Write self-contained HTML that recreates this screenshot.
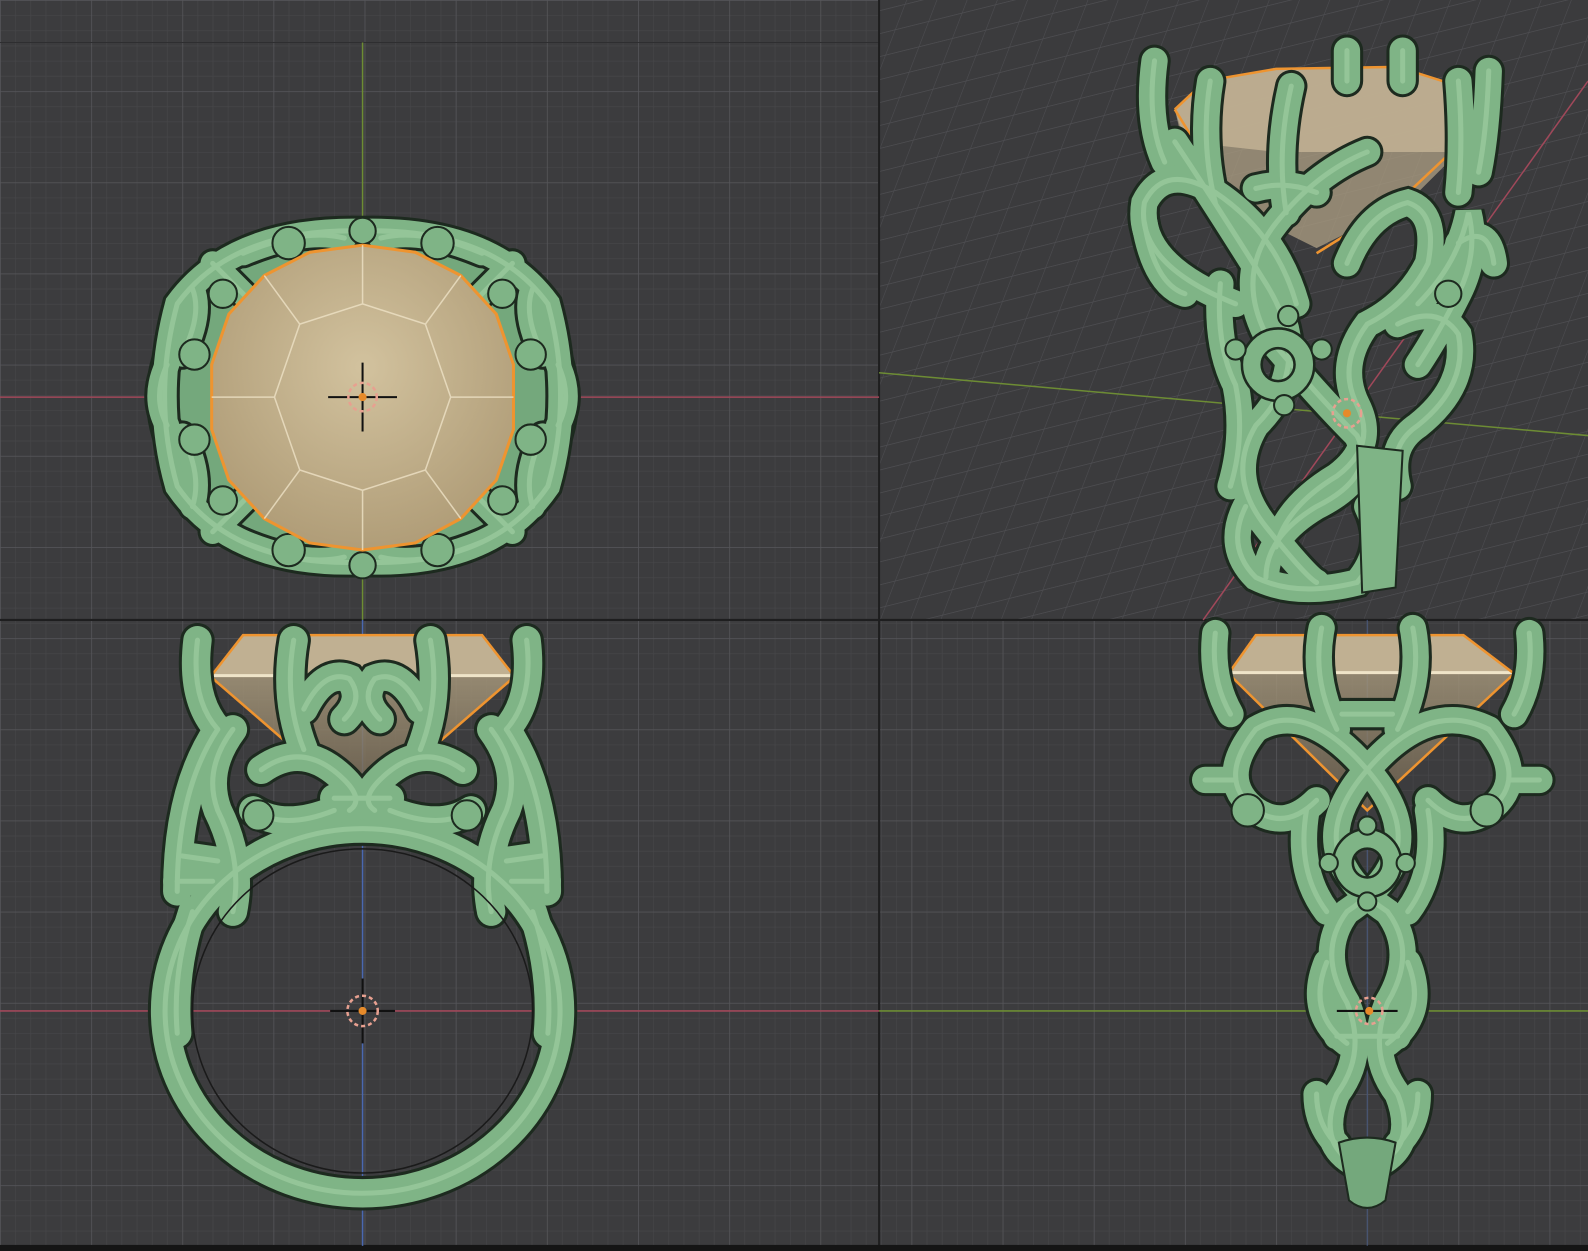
<!DOCTYPE html>
<html><head><meta charset="utf-8"><style>
html,body{margin:0;padding:0;background:#1b1b1b;}
svg{display:block}
</style></head><body>
<svg width="1588" height="1251" viewBox="0 0 1568 1235" preserveAspectRatio="none" xmlns="http://www.w3.org/2000/svg">
<defs>
<pattern id="g" width="15" height="15" patternUnits="userSpaceOnUse">
<rect width="15" height="15" fill="#3c3c3e"/>
<path d="M0 0H15M0 0V15" stroke="#47474a" stroke-width="1.2"/>
</pattern>
<pattern id="G" width="90" height="90" patternUnits="userSpaceOnUse">
<rect width="90" height="90" fill="url(#g)"/>
<path d="M0 0H90M0 0V90" stroke="#56565a" stroke-width="1.5"/>
</pattern>
<pattern id="P" width="34" height="22" patternUnits="userSpaceOnUse" patternTransform="rotate(-14) skewX(-35)">
<rect width="34" height="22" fill="#3b3b3d"/>
<path d="M0 0H34M0 0V22" stroke="#4e4e52" stroke-width="1.3"/>
</pattern>
<radialGradient id="gem" cx="50%" cy="40%" r="60%">
<stop offset="0" stop-color="#d2c29e"/><stop offset="1" stop-color="#b09d78"/>
</radialGradient>
<linearGradient id="gemside" x1="0" y1="0" x2="0" y2="1">
<stop offset="0" stop-color="#b6a788"/><stop offset="1" stop-color="#6a5e4c"/>
</linearGradient>

<g id="tl">
<path d="M175 300 Q150 392 175 480 Q230 560 358 555 Q486 560 541 480 Q566 392 541 300 Q486 225 358 228 Q230 225 175 300Z"/>
<path d="M165 360 Q150 392 165 420 M551 360 Q566 392 551 420"/>
<path d="M210 260 L250 300 M506 260 L466 300 M210 525 L250 485 M506 525 L466 485"/>
<path d="M180 430 Q200 470 190 500 M536 430 Q516 470 526 500 M180 350 Q200 310 190 285 M536 350 Q516 310 526 285"/>
<path d="M240 250 Q300 225 340 235 M476 250 Q416 225 376 235 M240 535 Q300 560 340 550 M476 535 Q416 560 376 550"/>
</g>
<g id="tr">
<path d="M1140 60 Q1132 120 1150 160 M1195 80 Q1185 140 1200 200 M1275 85 Q1260 150 1270 210 M1470 70 Q1468 130 1460 170 M1440 80 Q1445 140 1440 190 M1330 50 L1330 80 M1385 50 L1385 80"/>
<path d="M1160 140 Q1200 200 1250 280 Q1300 360 1240 420 Q1210 470 1250 520 Q1290 570 1300 575"/>
<path d="M1220 300 Q1120 260 1130 200 Q1150 160 1200 190 Q1260 230 1280 300"/>
<path d="M1350 150 Q1300 170 1260 220 Q1220 270 1250 330 Q1300 390 1340 430 Q1360 470 1300 500 Q1250 530 1250 570"/>
<path d="M1330 260 Q1350 210 1390 200 Q1420 210 1410 260 Q1390 300 1350 320 Q1320 360 1340 400 Q1360 440 1320 470 Q1270 500 1260 540"/>
<path d="M1230 500 Q1210 540 1240 570 Q1280 590 1340 575 Q1370 540 1350 500"/>
<path d="M1400 300 Q1440 260 1450 210 Q1460 250 1440 290 Q1420 330 1400 360"/>
<path d="M1205 280 Q1200 340 1220 380 Q1230 430 1215 480"/>
<path d="M1240 186 Q1270 178 1300 190"/>
<path d="M1380 320 Q1420 300 1440 330 Q1450 380 1400 420 Q1370 440 1380 480"/>
<path d="M1440 240 Q1470 220 1475 260 M1130 220 Q1140 280 1170 290"/>
</g>
<g id="bl">
<path d="M358 810 m-195 188 a195 180 0 1 0 390 0 a195 180 0 1 0 -390 0"/>
<path d="M195 632 Q188 690 215 720 M290 632 Q280 690 300 740 M425 632 Q435 690 415 740 M520 632 Q527 690 500 720"/>
<path d="M215 720 Q175 780 175 880 M500 720 Q540 780 540 880"/>
<path d="M230 720 Q200 760 215 800 Q240 850 230 900 M485 720 Q515 760 500 800 Q475 850 485 900"/>
<path d="M300 700 Q320 660 345 670 Q360 690 340 710 M415 700 Q395 660 370 670 Q355 690 375 710"/>
<path d="M258 760 Q300 730 340 770 Q360 790 345 800 M457 760 Q415 730 375 770 Q355 790 370 800"/>
<path d="M250 800 Q280 820 330 800 M465 800 Q435 820 385 800"/>
<path d="M180 845 L215 850 M175 870 L210 870 M535 845 L500 850 M540 870 L505 870"/>
<path d="M330 788 L385 788"/>
<path d="M190 900 Q170 960 175 1020 M526 900 Q546 960 541 1020"/>
</g>
<g id="br">
<path d="M1200 625 Q1195 670 1215 705 M1305 620 Q1295 670 1320 720 M1395 620 Q1405 670 1380 720 M1510 625 Q1515 670 1495 705"/>
<path d="M1240 720 Q1290 690 1350 760 Q1420 840 1330 900 Q1300 940 1330 990 Q1350 1040 1320 1080 Q1300 1130 1340 1150"/>
<path d="M1470 720 Q1410 690 1350 760 Q1280 840 1370 900 Q1400 940 1370 990 Q1350 1040 1380 1080 Q1400 1130 1360 1150"/>
<path d="M1240 720 Q1200 770 1240 800 Q1270 820 1300 790 M1470 720 Q1510 770 1470 800 Q1440 820 1410 790"/>
<path d="M1310 950 Q1290 1000 1330 1030 M1390 950 Q1410 1000 1370 1030"/>
<path d="M1190 770 L1220 770 M1520 770 L1490 770"/>
<path d="M1325 705 L1375 705 M1320 1023 L1380 1023"/>
<path d="M1300 1080 Q1300 1110 1320 1130 M1400 1080 Q1400 1110 1380 1130"/>
<path d="M1290 800 Q1280 860 1310 900 M1410 800 Q1420 860 1390 900"/>
</g>
</defs>

<rect x="0" y="0" width="868" height="612" fill="url(#G)"/>
<rect x="868" y="0" width="700" height="612" fill="url(#P)"/>
<rect x="0" y="612" width="868" height="620" fill="url(#G)"/>
<rect x="868" y="612" width="700" height="620" fill="url(#G)"/>
<path d="M0 42H868" stroke="#2e2e30" stroke-width="1"/>
<line x1="868" y1="0" x2="868" y2="1232" stroke="#1e1e1f" stroke-width="2"/>
<line x1="0" y1="612" x2="1568" y2="612" stroke="#1e1e1f" stroke-width="2"/>
<rect x="0" y="1229" width="1568" height="6" fill="#151515"/>

<line x1="0" y1="392" x2="868" y2="392" stroke="#a0485a" stroke-width="1.5"/>
<line x1="358" y1="42" x2="358" y2="612" stroke="#6d8c34" stroke-width="1.5"/>
<line x1="868" y1="368" x2="1568" y2="430" stroke="#6d8c34" stroke-width="1.5"/>
<line x1="1188" y1="612" x2="1568" y2="80" stroke="#a0485a" stroke-width="1.5"/>
<line x1="0" y1="998" x2="868" y2="998" stroke="#a0485a" stroke-width="1.5"/>
<line x1="358" y1="612" x2="358" y2="1230" stroke="#4a68b0" stroke-width="1.5"/>
<line x1="868" y1="998" x2="1568" y2="998" stroke="#6d8c34" stroke-width="1.5"/>
<line x1="1350" y1="612" x2="1350" y2="1230" stroke="#45567a" stroke-width="1"/>

<g fill="none" stroke-linecap="round">
<ellipse cx="358" cy="392" rx="212" ry="172" fill="#74a87c" stroke="#1d2a1f" stroke-width="4"/>
<use href="#tl" stroke="#1d2a1f" stroke-width="30"/>
<use href="#tl" stroke="#7fb486" stroke-width="24"/>
<use href="#tl" stroke="#a9d6aa" stroke-width="5" opacity=".5"/>
</g>
<g fill="#7fb486" stroke="#1d2a1f" stroke-width="2">
<circle cx="285" cy="240" r="16"/><circle cx="432" cy="240" r="16"/><circle cx="285" cy="543" r="16"/><circle cx="432" cy="543" r="16"/>
<circle cx="358" cy="228" r="13"/><circle cx="358" cy="558" r="13"/><circle cx="192" cy="350" r="15"/><circle cx="524" cy="350" r="15"/><circle cx="192" cy="434" r="15"/><circle cx="524" cy="434" r="15"/>
<circle cx="220" cy="290" r="14"/><circle cx="496" cy="290" r="14"/><circle cx="220" cy="494" r="14"/><circle cx="496" cy="494" r="14"/>
</g>
<polygon points="358,242 410,249 455,272 490,310 507,360 507,424 490,474 455,512 410,536 358,543 306,536 261,512 226,474 209,424 209,360 226,310 261,272 306,249" fill="url(#gem)" stroke="#ee9430" stroke-width="3"/>
<g stroke="#eee2c6" stroke-width="1.5" fill="none" opacity=".8">
<polygon points="358,300 420,320 445,392 420,464 358,484 296,464 271,392 296,320"/>
<path d="M358,242 L358,300 M455,272 L420,320 M507,392 L445,392 M455,512 L420,464 M358,543 L358,484 M261,512 L296,464 M209,392 L271,392 M261,272 L296,320"/>
</g>
<g stroke="#111" stroke-width="2"><line x1="324" y1="392" x2="392" y2="392"/><line x1="358" y1="358" x2="358" y2="426"/></g>
<circle cx="358" cy="392" r="14" fill="none" stroke="#e8a090" stroke-width="2.5" stroke-dasharray="4 3"/>
<circle cx="358" cy="392" r="4" fill="#e68a2a"/>

<polygon points="1160,108 1190,80 1260,68 1380,66 1440,85 1465,110 1440,150 1390,200 1300,245 1220,205 1170,150" fill="#a89a80" opacity=".8"/>
<polygon points="1160,108 1190,80 1260,68 1380,66 1440,85 1465,110 1440,150 1380,150 1260,150 1170,140" fill="#c2b294" opacity=".85"/>
<path d="M1160,108 1190,80 1260,68 1380,66 1440,85 1465,110 M1160,108 L1220,205 M1465,120 L1380,200 L1300,250" stroke="#ee9430" stroke-width="2.5" fill="none"/>
<g fill="none" stroke-linecap="round">
<use href="#tr" stroke="#1d2a1f" stroke-width="32"/>
<use href="#tr" stroke="#7fb486" stroke-width="26"/>
<use href="#tr" stroke="#a9d6aa" stroke-width="5" opacity=".5"/>
</g>
<polygon points="1340,440 1385,445 1378,580 1345,585" fill="#7fb486" stroke="#1d2a1f" stroke-width="2"/>
<circle cx="1262" cy="360" r="26" fill="none" stroke="#1d2a1f" stroke-width="22"/>
<circle cx="1262" cy="360" r="26" fill="none" stroke="#7fb486" stroke-width="17"/>
<g fill="#7fb486" stroke="#1d2a1f" stroke-width="2"><circle cx="1220" cy="345" r="10"/><circle cx="1305" cy="345" r="10"/><circle cx="1272" cy="312" r="10"/><circle cx="1268" cy="400" r="10"/><circle cx="1430" cy="290" r="13"/></g>
<circle cx="1330" cy="408" r="14" fill="none" stroke="#e8a090" stroke-width="2.5" stroke-dasharray="4 3"/>
<circle cx="1330" cy="408" r="4" fill="#e68a2a"/>

<polygon points="208,668 240,627 476,627 508,668 358,798" fill="url(#gemside)" opacity=".85"/>
<polygon points="208,668 240,627 476,627 508,668" fill="#c0b092"/>
<line x1="210" y1="667" x2="506" y2="667" stroke="#efe4c8" stroke-width="3"/>
<path d="M208,668 240,627 476,627 508,668 358,798Z" stroke="#ee9430" stroke-width="2.5" fill="none"/>
<g fill="none" stroke-linecap="round">
<use href="#bl" stroke="#1d2a1f" stroke-width="34"/>
<use href="#bl" stroke="#7fb486" stroke-width="28"/>
<use href="#bl" stroke="#a9d6aa" stroke-width="5" opacity=".5"/>
</g>
<ellipse cx="358" cy="998" rx="168" ry="160" fill="none" stroke="#1a1a1a" stroke-width="1.5"/>
<g fill="#7fb486" stroke="#1d2a1f" stroke-width="2"><circle cx="255" cy="805" r="15"/><circle cx="461" cy="805" r="15"/></g>
<g stroke="#111" stroke-width="2"><line x1="326" y1="998" x2="390" y2="998"/><line x1="358" y1="966" x2="358" y2="1030"/></g>
<circle cx="358" cy="998" r="15" fill="none" stroke="#e8a090" stroke-width="2.5" stroke-dasharray="4 3"/>
<circle cx="358" cy="998" r="4" fill="#e68a2a"/>

<polygon points="1213,665 1240,627 1445,627 1495,665 1350,800" fill="url(#gemside)" opacity=".8"/>
<polygon points="1213,665 1240,627 1445,627 1495,665" fill="#c0b092"/>
<line x1="1215" y1="664" x2="1493" y2="664" stroke="#efe4c8" stroke-width="3"/>
<path d="M1213,665 1240,627 1445,627 1495,665 1350,800Z" stroke="#ee9430" stroke-width="2.5" fill="none"/>
<g fill="none" stroke-linecap="round">
<use href="#br" stroke="#1d2a1f" stroke-width="32"/>
<use href="#br" stroke="#7fb486" stroke-width="26"/>
<use href="#br" stroke="#a9d6aa" stroke-width="5" opacity=".5"/>
</g>
<circle cx="1350" cy="852" r="24" fill="none" stroke="#1d2a1f" stroke-width="22"/>
<circle cx="1350" cy="852" r="24" fill="none" stroke="#7fb486" stroke-width="17"/>
<g fill="#7fb486" stroke="#1d2a1f" stroke-width="2"><circle cx="1350" cy="815" r="9"/><circle cx="1350" cy="890" r="9"/><circle cx="1312" cy="852" r="9"/><circle cx="1388" cy="852" r="9"/><circle cx="1232" cy="800" r="16"/><circle cx="1468" cy="800" r="16"/></g>
<path d="M1322 1128 Q1350 1118 1378 1128 L1368 1185 Q1350 1200 1332 1185Z" fill="#74a87c" stroke="#1d2a1f" stroke-width="2"/>
<g stroke="#111" stroke-width="2"><line x1="1320" y1="998" x2="1380" y2="998"/></g>
<circle cx="1352" cy="998" r="13" fill="none" stroke="#e8a090" stroke-width="2.5" stroke-dasharray="4 3"/>
<circle cx="1352" cy="998" r="4" fill="#e68a2a"/>
</svg>
</body></html>
